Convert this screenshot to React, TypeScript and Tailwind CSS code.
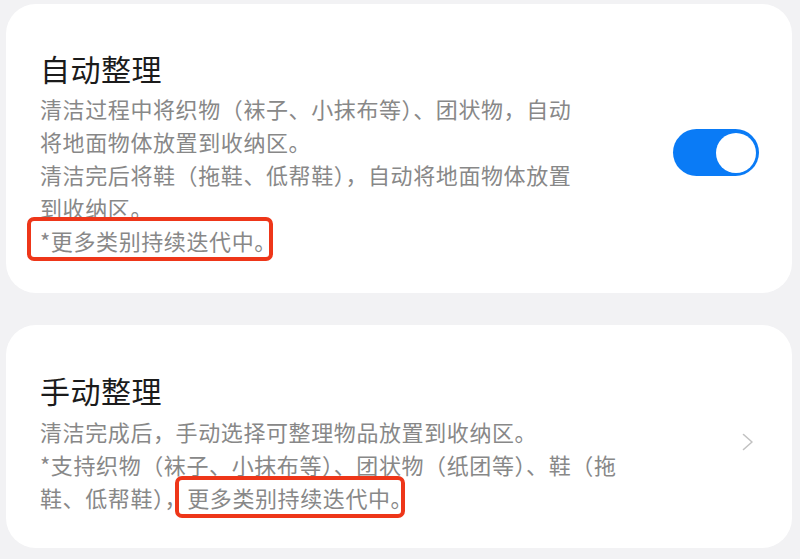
import React from "react";

const font = { fontFamily: '"Noto Sans CJK SC", "Noto Sans", sans-serif' };

function Toggle() {
  return (
    <div className="flex h-[47px] w-[86px] shrink-0 items-center justify-end rounded-full bg-[#0a7bf6] pr-[3px]">
      <div className="h-[40px] w-[40px] rounded-full bg-white" />
    </div>
  );
}

function Chevron() {
  return (
    <svg width="12" height="18" viewBox="0 0 12 18" fill="none" className="shrink-0">
      <path d="M1.5 1.5 L10 9 L1.5 16.5" stroke="#c2c2c2" strokeWidth="1.6" strokeLinecap="round" strokeLinejoin="round" />
    </svg>
  );
}

// red annotation frame drawn over the text
function Marked({ children, box }: { children: React.ReactNode; box: string }) {
  return (
    <span className="relative inline-block">
      {children}
      <span className={`pointer-events-none absolute rounded-[7px] border-4 border-[#ee3619] ${box}`} />
    </span>
  );
}

export default function App() {
  return (
    <div style={font} className="min-h-[559px] w-[800px] bg-[#f2f2f4] pl-[6px] pr-[8px] pt-[4px]">
      {/* auto */}
      <div className="flex items-center justify-between rounded-[30px] bg-white pb-[36px] pl-[34px] pr-[33px] pt-[44px]">
        <div>
          <div className="text-[30px] leading-[40px] tracking-[0.5px] text-[#1b1b1b]">自动整理</div>
          <div className="mt-[4px] text-[22px] leading-[33px] tracking-[0.6px] text-[#888888]">
            清洁过程中将织物（袜子、小抹布等）、团状物，自动
            <br />
            将地面物体放置到收纳区。
            <br />
            清洁完后将鞋（拖鞋、低帮鞋），自动将地面物体放置
            <br />
            到收纳区。
            <br />
            <Marked box="left-[-13px] top-[-7px] h-[44px] w-[246px]">*更多类别持续迭代中。</Marked>
          </div>
        </div>
        <Toggle />
      </div>

      {/* manual */}
      <div className="mt-[32px] flex items-center justify-between rounded-[30px] bg-white pb-[34px] pl-[34px] pr-[38px] pt-[45px]">
        <div>
          <div className="text-[30px] leading-[40px] tracking-[0.5px] text-[#1b1b1b]">手动整理</div>
          <div className="mt-[5px] text-[22px] leading-[33px] tracking-[0.6px] text-[#888888]">
            清洁完成后，手动选择可整理物品放置到收纳区。
            <br />
            *支持织物（袜子、小抹布等）、团状物（纸团等）、鞋（拖
            <br />
            鞋、低帮鞋），
            <Marked box="left-[-12px] top-[-5px] h-[42px] w-[230px]">更多类别持续迭代中。</Marked>
          </div>
        </div>
        <Chevron />
      </div>
    </div>
  );
}
